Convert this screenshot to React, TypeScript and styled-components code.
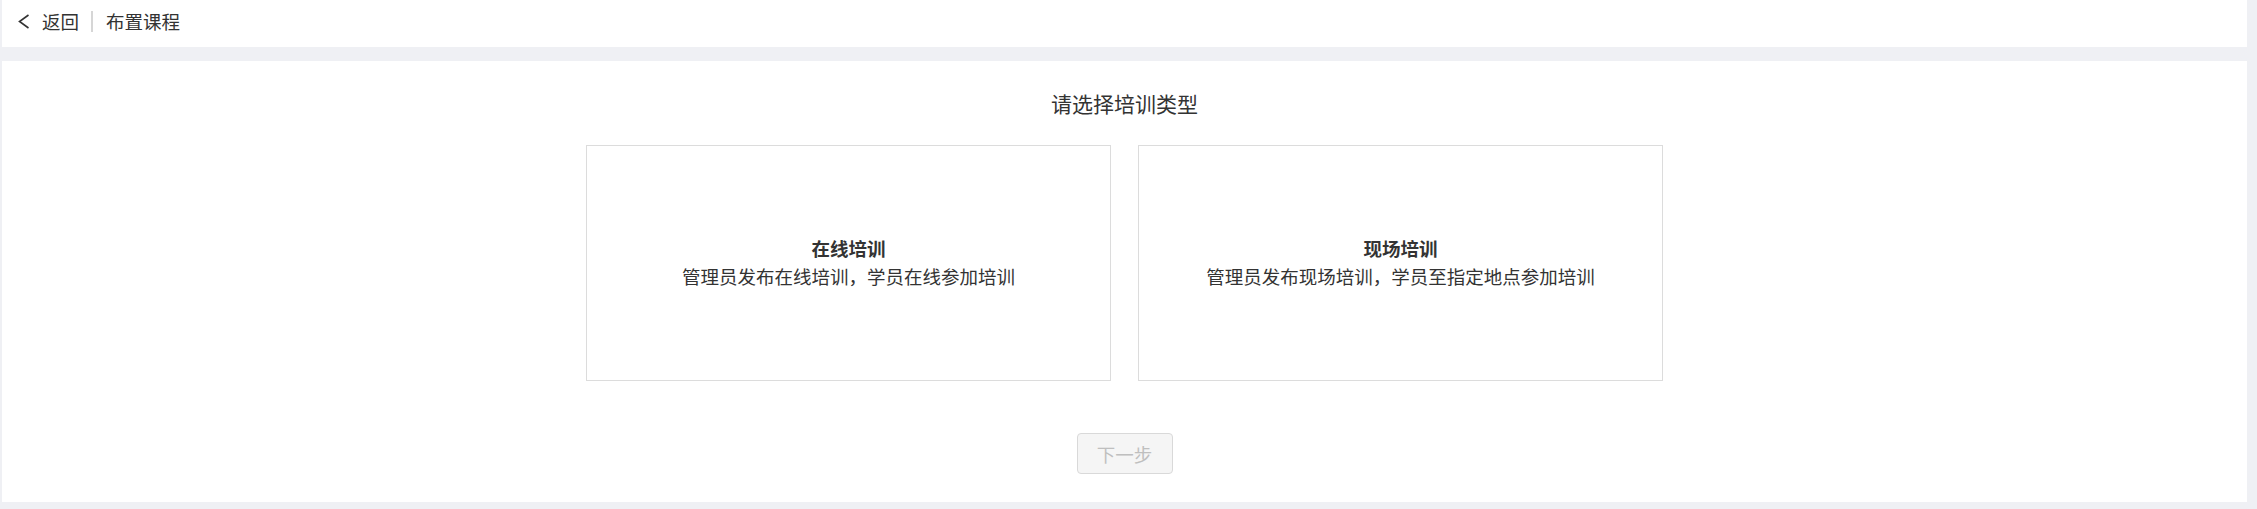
import React, { useState } from "react";
import styled, { createGlobalStyle } from "styled-components";

const GlobalStyle = createGlobalStyle`
  html, body {
    margin: 0;
    padding: 0;
    background: #eff0f4;
    font-family: "Noto Sans CJK SC", "Noto Sans", sans-serif;
    color: #333;
  }
  * { box-sizing: border-box; }
`;

const Page = styled.div`
  display: flex;
  flex-direction: column;
  padding: 0 10px 7px 2px;
  gap: 14px;
`;

const Header = styled.header`
  height: 47px;
  background: #fff;
  display: flex;
  align-items: center;
  padding: 0 0 5px 16px;
  font-size: 18.5px;
  color: #333;
`;

const BackButton = styled.button`
  display: flex;
  align-items: center;
  gap: 12px;
  border: none;
  background: none;
  padding: 0;
  font: inherit;
  color: inherit;
  cursor: pointer;
`;

const Divider = styled.span`
  width: 2px;
  height: 21px;
  background: #d6d6d6;
  margin: 0 13px 0 12px;
`;

const Panel = styled.main`
  height: 441px;
  background: #fff;
  display: flex;
  flex-direction: column;
  align-items: center;
  padding-top: 27px;
`;

const Title = styled.h2`
  margin: 0;
  font-size: 21px;
  line-height: 30px;
  font-weight: 400;
  color: #333;
`;

const CardRow = styled.div`
  display: flex;
  gap: 27px;
  margin-top: 27px;
`;

const Card = styled.div<{ $active: boolean }>`
  width: 525px;
  height: 236px;
  padding-bottom: 2px;
  border: 1px solid ${(p) => (p.$active ? "#1890ff" : "#dcdcdc")};
  display: flex;
  flex-direction: column;
  align-items: center;
  justify-content: center;
  cursor: pointer;
`;

const CardTitle = styled.div`
  font-size: 18.5px;
  line-height: 28px;
  font-weight: 700;
  color: #333;
`;

const CardDesc = styled.div`
  font-size: 18.5px;
  line-height: 28px;
  color: #333;
`;

const NextButton = styled.button`
  margin-top: 52px;
  width: 96px;
  height: 41px;
  border: 1px solid #d9d9d9;
  border-radius: 4px;
  background: #f5f5f5;
  color: #bfbfbf;
  font-family: inherit;
  font-size: 18.5px;
  cursor: not-allowed;
`;

const ChevronLeft = () => (
  <svg width="12" height="15" viewBox="0 0 12 15" fill="none">
    <polyline points="10.5,1 1.5,7.5 10.5,14" stroke="#333" strokeWidth="1.6" />
  </svg>
);

const types = [
  { key: "online", title: "在线培训", desc: "管理员发布在线培训，学员在线参加培训" },
  { key: "onsite", title: "现场培训", desc: "管理员发布现场培训，学员至指定地点参加培训" },
];

export default function App() {
  const [selected, setSelected] = useState<string | null>(null);
  return (
    <>
      <GlobalStyle />
      <Page>
        <Header>
          <BackButton>
            <ChevronLeft />
            <span>返回</span>
          </BackButton>
          <Divider />
          <span>布置课程</span>
        </Header>
        <Panel>
          <Title>请选择培训类型</Title>
          <CardRow>
            {types.map((t) => (
              <Card key={t.key} $active={selected === t.key} onClick={() => setSelected(t.key)}>
                <CardTitle>{t.title}</CardTitle>
                <CardDesc>{t.desc}</CardDesc>
              </Card>
            ))}
          </CardRow>
          <NextButton disabled={!selected}>下一步</NextButton>
        </Panel>
      </Page>
    </>
  );
}
